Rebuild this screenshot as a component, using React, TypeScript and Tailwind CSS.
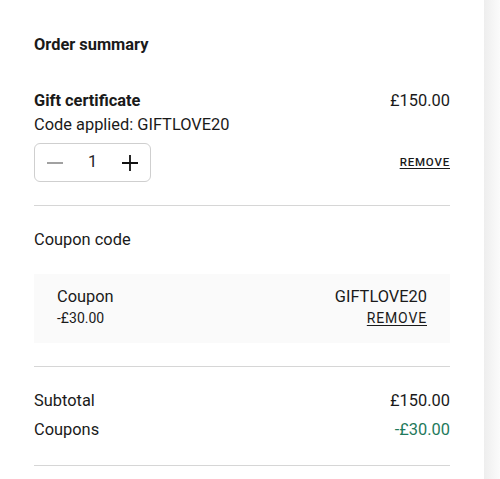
import React, { useState } from 'react';

function Stepper() {
  const [qty, setQty] = useState(1);
  return (
    <div className="flex h-[39px] w-[117px] items-center justify-between rounded-md border border-[#cfcfcf] px-[10px]">
      <button onClick={() => setQty(Math.max(1, qty - 1))} className="flex h-5 w-5 items-center justify-center">
        <svg width="18" height="18" viewBox="0 0 18 18">
          <path d="M1 9h16" stroke="#8a8a8a" strokeWidth="1.6" />
        </svg>
      </button>
      <span className="text-[16.4px] text-[#222]">{qty}</span>
      <button onClick={() => setQty(qty + 1)} className="flex h-5 w-5 items-center justify-center">
        <svg width="18" height="18" viewBox="0 0 18 18">
          <path d="M1 9h16M9 1v16" stroke="#111" strokeWidth="1.8" />
        </svg>
      </button>
    </div>
  );
}

export default function App() {
  return (
    <div className="flex h-[479px] w-[500px] bg-white font-['Roboto',sans-serif] text-[16.4px] text-[#1a1a1a]">
      <div className="w-[484px] px-[34px] pt-[33px]">
        <h2 className="font-bold leading-6">Order summary</h2>

        <div className="mt-[32px] flex justify-between">
          <div>
            <div className="font-bold leading-6">Gift certificate</div>
            <div className="leading-6">Code applied: GIFTLOVE20</div>
          </div>
          <div className="leading-6">£150.00</div>
        </div>

        <div className="mt-[6px] flex items-center justify-between">
          <Stepper />
          <a href="#" className="text-[11.5px] font-medium tracking-[0.07em] underline underline-offset-2">REMOVE</a>
        </div>

        <hr className="mt-[23px] border-t border-[#d6d6d6]" />

        <div className="mt-[22px] leading-6">Coupon code</div>

        <div className="mt-[22px] flex justify-between bg-[#fafafa] px-[23px] pt-[11px] pb-[16px]">
          <div>
            <div className="leading-6">Coupon</div>
            <div className="text-sm leading-[18px]">-£30.00</div>
          </div>
          <div className="flex flex-col items-end">
            <div className="leading-6">GIFTLOVE20</div>
            <a href="#" className="text-sm leading-[18px] tracking-[0.06em] underline underline-offset-2">REMOVE</a>
          </div>
        </div>

        <hr className="mt-[23px] border-t border-[#d6d6d6]" />

        <div className="mt-[22px] flex justify-between leading-6">
          <span>Subtotal</span>
          <span>£150.00</span>
        </div>
        <div className="mt-[5px] flex justify-between leading-6">
          <span>Coupons</span>
          <span className="text-[#1f7a5c]">-£30.00</span>
        </div>

        <hr className="mt-[23px] border-t border-[#d6d6d6]" />
      </div>
      <div className="flex-1 bg-gradient-to-r from-[#eeeeee] to-[#fbfbfb]" />
    </div>
  );
}
